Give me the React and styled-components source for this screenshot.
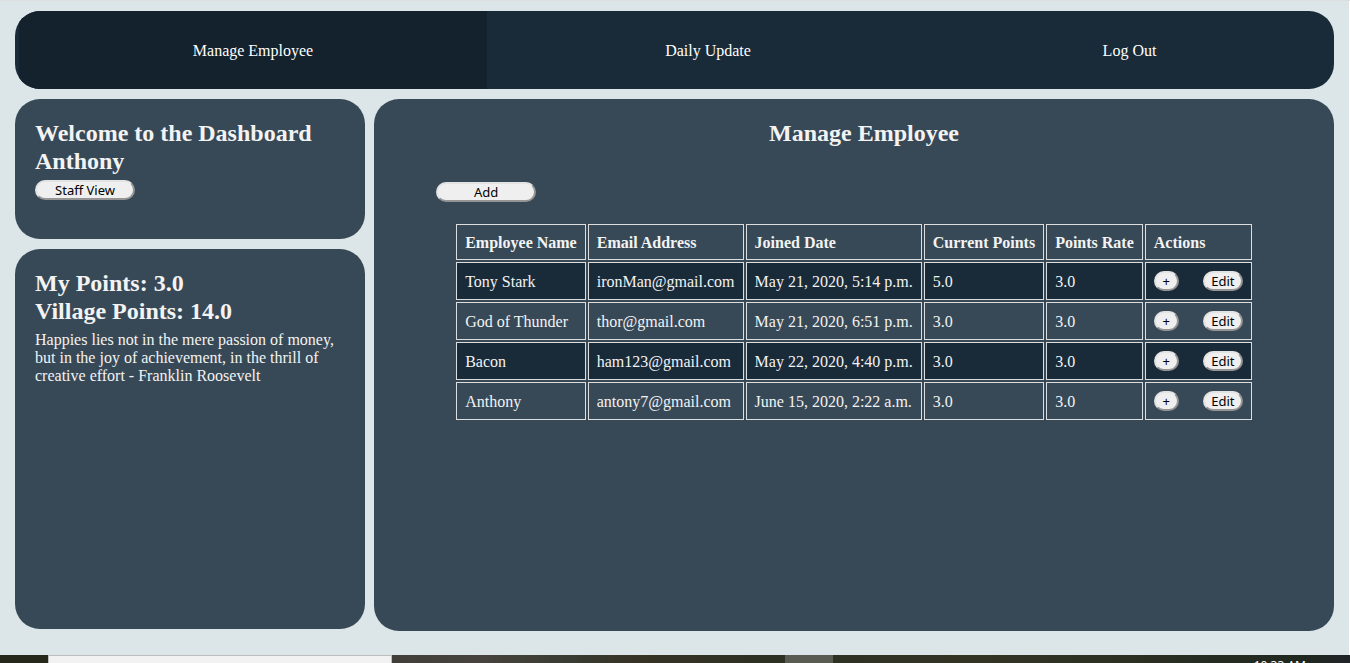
import React from 'react';
import styled, { createGlobalStyle } from 'styled-components';

const GlobalStyle = createGlobalStyle`
  * { box-sizing: border-box; }
  body {
    margin: 0;
    background: #dce5e7;
    color: #f3f3f3;
    font: 16px/18px "Liberation Serif", "Times New Roman", serif;
  }
`;

const Screen = styled.div`
  display: flex;
  flex-direction: column;
  min-height: 100vh;
  overflow: hidden;
  border-top: 1px solid #dedede;
`;

const Page = styled.div`
  flex: 1;
  padding: 10px 15px 24px;
  border-right: 1px solid #fff;
`;

const Nav = styled.nav`
  display: grid;
  grid-template-columns: 468fr 442fr 401fr;
  padding: 0 4px;
  margin-bottom: 10px;
  border-radius: 25px;
  background: #192a39;
  overflow: hidden;
`;

const NavLink = styled.a`
  padding: 31px 0 29px;
  color: #fff;
  text-align: center;
  text-decoration: none;
  background: ${(p) => (p.$active ? '#14222e' : 'transparent')};
`;

const Columns = styled.div`
  display: grid;
  grid-template-columns: 350fr 960fr;
  gap: 9px;
`;

const Sidebar = styled.aside`
  display: flex;
  flex-direction: column;
  gap: 10px;
`;

const Card = styled.section`
  min-height: ${(p) => p.$minHeight}px;
  padding: 20px;
  border-radius: 25px;
  background: #374957;
`;

const Heading = styled.h2`
  margin: 0;
  font-size: 24px;
  line-height: 28px;
`;

const PageHeading = styled(Heading)`
  padding-left: 20px;
  text-align: center;
`;

const Quote = styled.p`
  margin: 6px 0 0;
`;

const Button = styled.button`
  display: block;
  width: ${(p) => p.$width}px;
  height: 20px;
  padding: 0;
  border: 2px solid;
  border-color: #e3e3e3 #959595 #959595 #e3e3e3;
  border-radius: 10px;
  background: #efefef;
  color: #000;
  font: 13px/16px "Noto Sans", sans-serif;
`;

const Welcome = styled(Card)`
  ${Button} { margin-top: 5px; }
`;

const TableArea = styled.div`
  width: fit-content;
  margin: 35px auto 0;
`;

const Table = styled.table`
  margin: 20px 18px 0;
  border-spacing: 2px;

  th, td {
    padding: 9px 8px 7px;
    border: 1px solid #dddddd;
    text-align: left;
    white-space: nowrap;
  }
  td:last-child { padding: 8px; }
  tbody tr:nth-child(odd) { background: #192a39; }
`;

const Actions = styled.div`
  display: flex;
  gap: 24px;
`;

const Taskbar = styled.footer`
  display: flex;
  height: 8px;
  overflow: hidden;
  background: linear-gradient(90deg, #262819 0 48px, #413e39 392px, #47423e 480px, #3a3d33 560px, #363224 640px, #2c3122 780px, #343424 980px, #2c3122 1100px, #20271f 1300px, #202428);
`;

const SearchBox = styled.div`
  width: 344px;
  margin-left: 48px;
  border: 1px solid #bdbdbd;
  border-bottom: 0;
  background: #f2f2f2;
`;

const TaskItem = styled.div`
  width: 48px;
  margin-left: 393px;
  background: #595c50;
`;

const Clock = styled.time`
  margin: 4px 44px 0 auto;
  color: #fff;
  font: 12px/14px "Noto Sans", sans-serif;
`;

const headers = ['Employee Name', 'Email Address', 'Joined Date', 'Current Points', 'Points Rate', 'Actions'];
const employees = [
  ['Tony Stark', 'ironMan@gmail.com', 'May 21, 2020, 5:14 p.m.', '5.0', '3.0'],
  ['God of Thunder', 'thor@gmail.com', 'May 21, 2020, 6:51 p.m.', '3.0', '3.0'],
  ['Bacon', 'ham123@gmail.com', 'May 22, 2020, 4:40 p.m.', '3.0', '3.0'],
  ['Anthony', 'antony7@gmail.com', 'June 15, 2020, 2:22 a.m.', '3.0', '3.0'],
];

export default function App() {
  return (
    <Screen>
      <GlobalStyle />
      <Page>
        <Nav>
          <NavLink href="#manage" $active>Manage Employee</NavLink>
          <NavLink href="#daily">Daily Update</NavLink>
          <NavLink href="#logout">Log Out</NavLink>
        </Nav>
        <Columns>
          <Sidebar>
            <Welcome $minHeight={140}>
              <Heading>Welcome to the Dashboard Anthony</Heading>
              <Button $width={100}>Staff View</Button>
            </Welcome>
            <Card $minHeight={380}>
              <Heading>My Points: 3.0</Heading>
              <Heading>Village Points: 14.0</Heading>
              <Quote>
                Happies lies not in the mere passion of money, but in the joy of
                achievement, in the thrill of creative effort - Franklin Roosevelt
              </Quote>
            </Card>
          </Sidebar>
          <Card as="main" $minHeight={532}>
            <PageHeading>Manage Employee</PageHeading>
            <TableArea>
              <Button $width={100}>Add</Button>
              <Table>
                <thead>
                  <tr>{headers.map((h) => <th key={h} scope="col">{h}</th>)}</tr>
                </thead>
                <tbody>
                  {employees.map((row) => (
                    <tr key={row[0]}>
                      {row.map((cell, i) => <td key={i}>{cell}</td>)}
                      <td>
                        <Actions>
                          <Button $width={25}>+</Button>
                          <Button $width={40}>Edit</Button>
                        </Actions>
                      </td>
                    </tr>
                  ))}
                </tbody>
              </Table>
            </TableArea>
          </Card>
        </Columns>
      </Page>
      <Taskbar>
        <SearchBox />
        <TaskItem />
        <Clock>10:33 AM</Clock>
      </Taskbar>
    </Screen>
  );
}
